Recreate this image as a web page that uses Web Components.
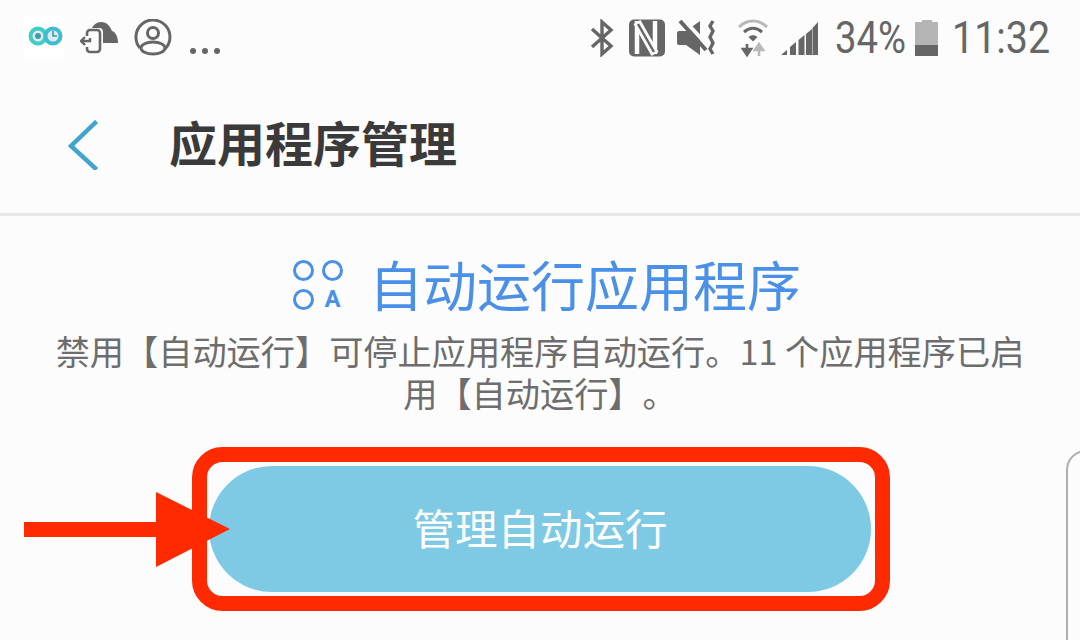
<!DOCTYPE html>
<html lang="zh-CN">
<head>
<meta charset="utf-8">
<title>应用程序管理</title>
<style>
  html, body { margin: 0; height: 100%; background: #fcfcfc; }
  body { font-family: "Noto Sans CJK SC", "Noto Sans", sans-serif; overflow: hidden; }
</style>
</head>
<body>
<settings-page>
  <status-bar slot="top"></status-bar>
  <app-bar slot="top">应用程序管理</app-bar>
  <auto-run-panel heading="自动运行应用程序">
    禁用【自动运行】可停止应用程序自动运行。11 个应用程序已启用【自动运行】。
  </auto-run-panel>
  <pill-button>管理自动运行</pill-button>
  <red-callout slot="overlay"></red-callout>
  <peek-card slot="overlay"></peek-card>
</settings-page>

<script>
class SettingsPage extends HTMLElement {
  constructor() {
    super()
    this.attachShadow({ mode: 'open' }).innerHTML = `
      <style>
        :host { display: flex; flex-direction: column; position: relative; width: 1080px; height: 640px; overflow: hidden; background: #fcfcfc; }
        main { display: flex; flex-direction: column; align-items: center; }
      </style>
      <slot name="top"></slot>
      <main><slot></slot></main>
      <slot name="overlay"></slot>
    `
  }
}

class StatusBar extends HTMLElement {
  constructor() {
    super()
    this.attachShadow({ mode: 'open' }).innerHTML = `
      <style>
        :host { display: flex; align-items: center; height: 76px; padding: 0 30px 0 24px; color: #666; font-family: Roboto, sans-serif; }
        svg { display: block; flex: none; }
        .right { margin-left: auto; display: flex; align-items: center; }
        .num { display: inline-block; font-size: 45px; line-height: 76px; transform-origin: left center; white-space: nowrap; }
        .pct { width: 70px; transform: scaleX(.85); }
        .time { width: 98px; transform: scaleX(.875); }
      </style>
      <svg width="40" height="44" viewBox="0 0 40 44">
        <rect width="40" height="44" fill="#fff"/>
        <circle cx="14" cy="20" r="7.500" fill="#dcecf0" stroke="#3fcdc4" stroke-width="4"/>
        <circle cx="29" cy="20" r="7.500" fill="#dcecf0" stroke="#3fbcd0" stroke-width="4"/>
        <circle cx="14" cy="20" r="3" fill="#4d97a8"/>
        <path d="M29 15v5h4" fill="none" stroke="#4d97a8" stroke-width="1.600"/>
      </svg>
      <svg width="38" height="34" viewBox="0 0 38 34" style="margin-left:16px" fill="none" stroke="#666">
        <path d="M11 22V12C11 5 16 1 21 1C27 1 30 5 32 10C36 11 38 17 38 22Z" fill="#666" stroke="none"/>
        <rect x="5" y="7" width="18" height="26" rx="4" fill="#fcfcfc" stroke="none"/>
        <path d="M7 15v-3a3 3 0 0 1 3-3h7a3 3 0 0 1 3 3v16a3 3 0 0 1-3 3h-7a3 3 0 0 1-3-3v-2" stroke-width="2.600"/>
        <path d="M1 20h9v-3M5 16l-4 4 4 4" stroke-width="2.400"/>
      </svg>
      <svg width="38" height="38" viewBox="0 0 38 38" style="margin-left:16px" fill="none" stroke="#666" stroke-width="3">
        <path d="M6 29A17 17 0 1 1 31 30"/>
        <circle cx="19" cy="14" r="5.500"/>
        <ellipse cx="19" cy="29" rx="12" ry="6"/>
      </svg>
      <svg width="36" height="10" viewBox="0 0 36 10" style="margin:26px 0 0 15px" fill="#666">
        <circle cx="6" cy="5" r="3"/><circle cx="18" cy="5" r="3"/><circle cx="30" cy="5" r="3"/>
      </svg>
      <div class="right">
        <svg width="24" height="38" viewBox="0 0 24 38" fill="none" stroke="#666" stroke-width="3.400">
          <path d="M2 10l19 17-9 8V3l9 8L2 28"/>
        </svg>
        <svg width="36" height="38" viewBox="0 0 36 38" style="margin-left:15px" fill="none">
          <rect width="36" height="37" y="0.500" rx="5" fill="#666"/>
          <path d="M8 2v33M26 2v33" stroke="#fcfcfc" stroke-width="4.500"/>
          <path d="M8 3l18 32" stroke="#fcfcfc" stroke-width="8"/>
          <path d="M9 5l16 28" stroke="#666" stroke-width="2.500"/>
        </svg>
        <svg width="40" height="36" viewBox="0 0 40 36" style="margin-left:12px">
          <path d="M2 11h7L23 1v34L9 25H2a2 2 0 0 1-2-2V13a2 2 0 0 1 2-2z" fill="#666"/>
          <path d="M7 0l25 27" stroke="#fcfcfc" stroke-width="4"/>
          <path d="M3 1l26 29" stroke="#666" stroke-width="4"/>
          <path d="M36 1l-3 5 3 5-3 6 3 6-3 6 3 5" fill="none" stroke="#666" stroke-width="3.400"/>
        </svg>
        <svg width="32" height="38" viewBox="0 0 32 38" style="margin-left:20px" fill="none">
          <path d="M2 8C10 0 22 0 30 8" stroke="#b8b8b8" stroke-width="3"/>
          <path d="M7 13c6-5 12-5 18 0" stroke="#666" stroke-width="3"/>
          <path d="M11.500 18c3-2.500 6-2.500 9 0L16 22.500z" fill="#666"/>
          <path d="M10 25v8M6 30l4 6 4-6z" stroke="#666" stroke-width="2.600" fill="#666"/>
          <path d="M22 37v-9M18 31l4-6 4 6z" stroke="#b8b8b8" stroke-width="2.600" fill="#b8b8b8"/>
        </svg>
        <svg width="38" height="36" viewBox="0 0 38 36" style="margin-left:12px" fill="#666">
          <path d="M0 35l6-5v5zM9 27l6-5v13H9zM17.500 20l6-5v20h-6zM25 14l6-5v26h-6zM31.500 8l5.500-6v33h-5.500z"/>
        </svg>
        <div class="num pct" style="margin-left:16px">34%</div>
        <svg width="24" height="37" viewBox="0 0 24 37" style="margin-left:10px">
          <rect x="7" y="0" width="10" height="3" fill="#b4b4b4"/>
          <rect x="0" y="2" width="23" height="24" fill="#b4b4b4"/>
          <rect x="0" y="25" width="23" height="11" fill="#666"/>
        </svg>
        <div class="num time" style="margin-left:13px">11:32</div>
      </div>
    `
  }
}

class AppBar extends HTMLElement {
  constructor() {
    super()
    this.attachShadow({ mode: 'open' }).innerHTML = `
      <style>
        :host { display: flex; align-items: center; height: 137px; padding-left: 68px; border-bottom: 3px solid #e6e6e6; color: #3a3a3a; box-sizing: content-box; }
        svg { flex: none; display: block; }
        h1 { margin: 0 0 8px 71px; font: 700 48px/1 "Noto Sans CJK SC", sans-serif; }
      </style>
      <svg width="30" height="50" viewBox="0 0 30 50" fill="none" stroke="#41a4cd" stroke-width="4.500" stroke-linecap="square">
        <path d="M27 3L3 26l24 22"/>
      </svg>
      <h1><slot></slot></h1>
    `
  }
}

class AutoRunPanel extends HTMLElement {
  constructor() {
    super()
    this.attachShadow({ mode: 'open' }).innerHTML = `
      <style>
        :host { display: flex; flex-direction: column; align-items: center; width: 980px; padding-top: 34px; text-align: center; }
        .head { display: flex; align-items: center; gap: 26px; margin-left: 14px; color: #4a90e8; font-size: 54px; line-height: 68px; }
        .glyph { flex: none; display: grid; grid-template-columns: 21px 21px; grid-auto-rows: 21px; gap: 8px; width: 50px; height: 50px; margin-top: 1px; }
        .glyph i { box-sizing: border-box; width: 21px; height: 21px; border: 3.800px solid #4a90e8; border-radius: 50%; }
        .glyph b { font: 700 24px/21px Roboto, sans-serif; text-align: center; }
        .hint { margin-top: 11px; color: #6d6d6d; font-size: 34.200px; line-height: 42px; text-spacing-trim: space-all; }
      </style>
      <div class="head">
        <div class="glyph"><i></i><i></i><i></i><b>A</b></div>
        <span class="title"></span>
      </div>
      <div class="hint"><slot></slot></div>
    `
    this.shadowRoot.querySelector('.title').textContent = this.getAttribute('heading')
  }
}

class PillButton extends HTMLElement {
  constructor() {
    super()
    this.attachShadow({ mode: 'open' }).innerHTML = `
      <style>
        :host { display: flex; align-items: center; justify-content: center; box-sizing: border-box; width: 662px; height: 126px; margin-top: 53px; padding-bottom: 5px; border-radius: 63px; background: #7ecae4; color: #fff; font-size: 42.500px; }
      </style>
      <slot></slot>
    `
  }
}

class RedCallout extends HTMLElement {
  constructor() {
    super()
    this.attachShadow({ mode: 'open' }).innerHTML = `
      <style>
        :host { display: block; position: absolute; left: 0; top: 0; width: 1080px; height: 640px; pointer-events: none; }
        svg { display: block; }
      </style>
      <svg width="1080" height="640" viewBox="0 0 1080 640">
        <rect x="199.500" y="454.500" width="683" height="149" rx="23" fill="none" stroke="#ff2a00" stroke-width="15"/>
        <path d="M24 522H156V492L230 529L156 567V537H24z" fill="#ff2a00"/>
      </svg>
    `
  }
}

class PeekCard extends HTMLElement {
  constructor() {
    super()
    this.attachShadow({ mode: 'open' }).innerHTML = `
      <style>
        :host { display: block; position: absolute; left: 1066px; top: 450px; width: 40px; height: 220px; box-sizing: border-box; border: 2px solid #b0b0b0; border-radius: 20px; }
      </style>
    `
  }
}

customElements.define('settings-page', SettingsPage)
customElements.define('status-bar', StatusBar)
customElements.define('app-bar', AppBar)
customElements.define('auto-run-panel', AutoRunPanel)
customElements.define('pill-button', PillButton)
customElements.define('red-callout', RedCallout)
customElements.define('peek-card', PeekCard)
</script>
</body>
</html>
